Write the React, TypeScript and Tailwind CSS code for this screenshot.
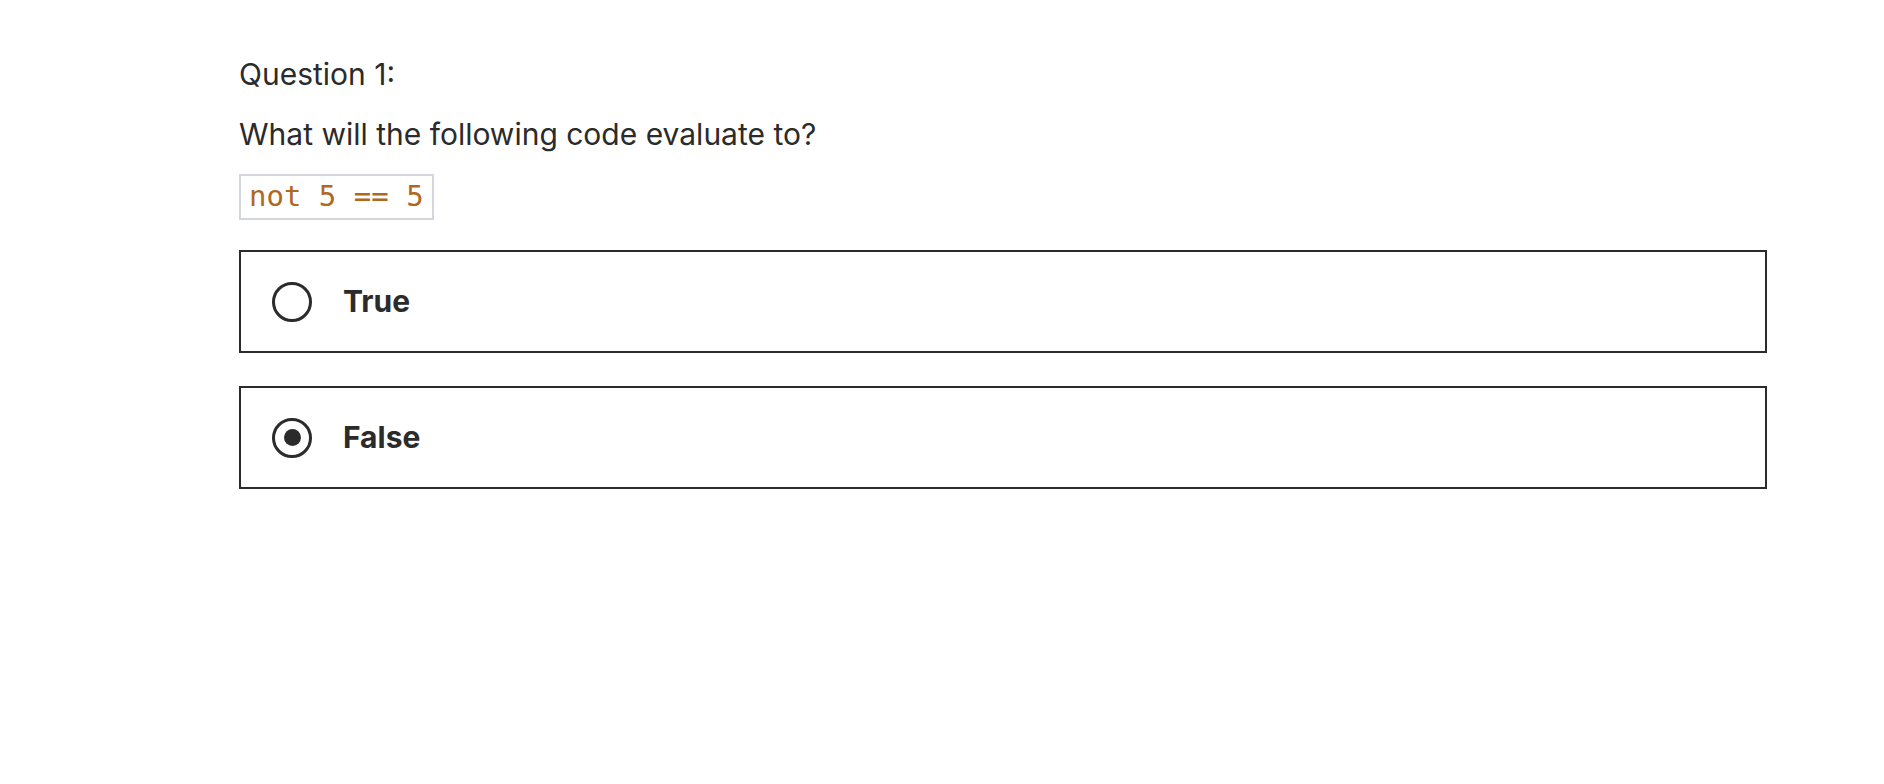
import React from "react";

function Radio({ checked }: { checked: boolean }) {
  return (
    <span className="flex h-[40px] w-[40px] shrink-0 items-center justify-center rounded-full border-[3.5px] border-[#2b2b2b]">
      {checked ? <span className="block h-[17px] w-[17px] rounded-full bg-[#2b2b2b]" /> : null}
    </span>
  );
}

function Option({ label, checked }: { label: string; checked: boolean }) {
  return (
    <label className="flex h-[103px] w-full items-center gap-[31px] border-2 border-[#2b2b2b] pl-[31px]">
      <Radio checked={checked} />
      <span className="text-[30px] font-bold text-[#2b2b2b]">{label}</span>
    </label>
  );
}

export default function App() {
  return (
    <div
      className="min-h-[784px] w-full bg-white text-[#2b2b2b]"
      style={{ fontFamily: "Inter, 'Noto Sans', sans-serif" }}
    >
      <div className="ml-[239px] w-[1528px] pt-[53px]">
        <p className="text-[30px] leading-[42px]">Question 1:</p>
        <p className="mt-[18px] text-[30px] leading-[42px]">What will the following code evaluate to?</p>
        <div className="mt-[19px] flex">
          <code
            className="flex h-[46px] items-center border-2 border-[#d3d6da] px-[8px] text-[29px] text-[#b0671f]"
            style={{ fontFamily: "'DejaVu Sans Mono', monospace" }}
          >
            not 5 == 5
          </code>
        </div>
        <div className="mt-[30px] flex flex-col gap-[33px]">
          <Option label="True" checked={false} />
          <Option label="False" checked={true} />
        </div>
      </div>
    </div>
  );
}
